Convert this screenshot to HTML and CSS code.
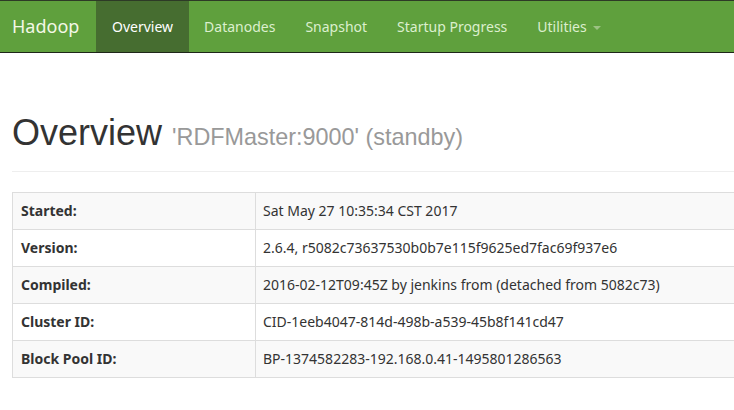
FILE: index.html
```html
<!DOCTYPE html>
<html>
<head>
  <meta charset="UTF-8">
  <title>Namenode information</title>
  <link rel="stylesheet" href="styles.css">
</head>
<body>
<header class="navbar">
  <a class="brand" href="javascript:;">Hadoop</a>
  <ul class="nav">
    <li class="active"><a href="javascript:;">Overview</a></li>
    <li><a href="javascript:;">Datanodes</a></li>
    <li><a href="javascript:;">Snapshot</a></li>
    <li><a href="javascript:;">Startup Progress</a></li>
    <li><a href="javascript:;">Utilities <span class="caret"></span></a></li>
  </ul>
</header>

<div class="container">
  <div class="page-header">
    <h1>Overview <small>'RDFMaster:9000' (standby)</small></h1>
  </div>

  <table class="table">
    <tr><th>Started:</th><td>Sat May 27 10:35:34 CST 2017</td></tr>
    <tr><th>Version:</th><td>2.6.4, r5082c73637530b0b7e115f9625ed7fac69f937e6</td></tr>
    <tr><th>Compiled:</th><td>2016-02-12T09:45Z by jenkins from (detached from 5082c73)</td></tr>
    <tr><th>Cluster ID:</th><td>CID-1eeb4047-814d-498b-a539-45b8f141cd47</td></tr>
    <tr><th>Block Pool ID:</th><td>BP-1374582283-192.168.0.41-1495801286563</td></tr>
  </table>
</div>
</body>
</html>
```

FILE: styles.css
```css
* {
  margin: 0;
  padding: 0;
  box-sizing: border-box;
}
html, body {
  overflow: hidden;
}
body {
  font-family: "Noto Sans", "Open Sans", sans-serif;
  font-size: 14px;
  line-height: 1.42857;
  color: #333;
  background: #fff;
}
a {
  text-decoration: none;
}

/* top bar */
.navbar {
  display: flex;
  height: 53px;
  background: #5fa03d;
  border-top: 1px solid #2d3a26;
  border-bottom: 1px solid #1e2619;
}
.brand {
  padding: 0 15px 0 12px;
  width: 96px;
  line-height: 51px;
  font-size: 18px;
  color: #f3f8e6;
}
.nav {
  display: flex;
  list-style: none;
}
.nav > li > a {
  display: block;
  padding: 0 15px;
  line-height: 51px;
  font-size: 14px;
  color: #dcefce;
}
.nav > li.active > a {
  background: #466d30;
  color: #fff;
  padding: 0 16px;
}
.caret {
  display: inline-block;
  width: 0;
  height: 0;
  margin-left: 3px;
  vertical-align: middle;
  border-top: 4px solid #9cc283;
  border-left: 4px solid transparent;
  border-right: 4px solid transparent;
}

/* content */
.container {
  padding-left: 12px;
}
.page-header {
  margin-top: 60px;
  padding-bottom: 18px;
  border-bottom: 1px solid #eee;
  margin-bottom: 20px;
}
h1 {
  font-family: "Liberation Sans", Arial, sans-serif;
  font-size: 36px;
  font-weight: 400;
  line-height: 1.1;
  color: #333;
}
h1 small {
  font-size: 23.4px;
  color: #999;
}

.table {
  width: 900px;
  border-collapse: collapse;
  border: 1px solid #ddd;
}
.table th,
.table td {
  padding: 8px 8px 8px 7px;
  border: 1px solid #ddd;
  text-align: left;
  vertical-align: top;
  white-space: nowrap;
}
.table th {
  width: 243px;
  padding-left: 8px;
  font-weight: 700;
}
.table tr:nth-child(odd) {
  background: #f9f9f9;
}
```
